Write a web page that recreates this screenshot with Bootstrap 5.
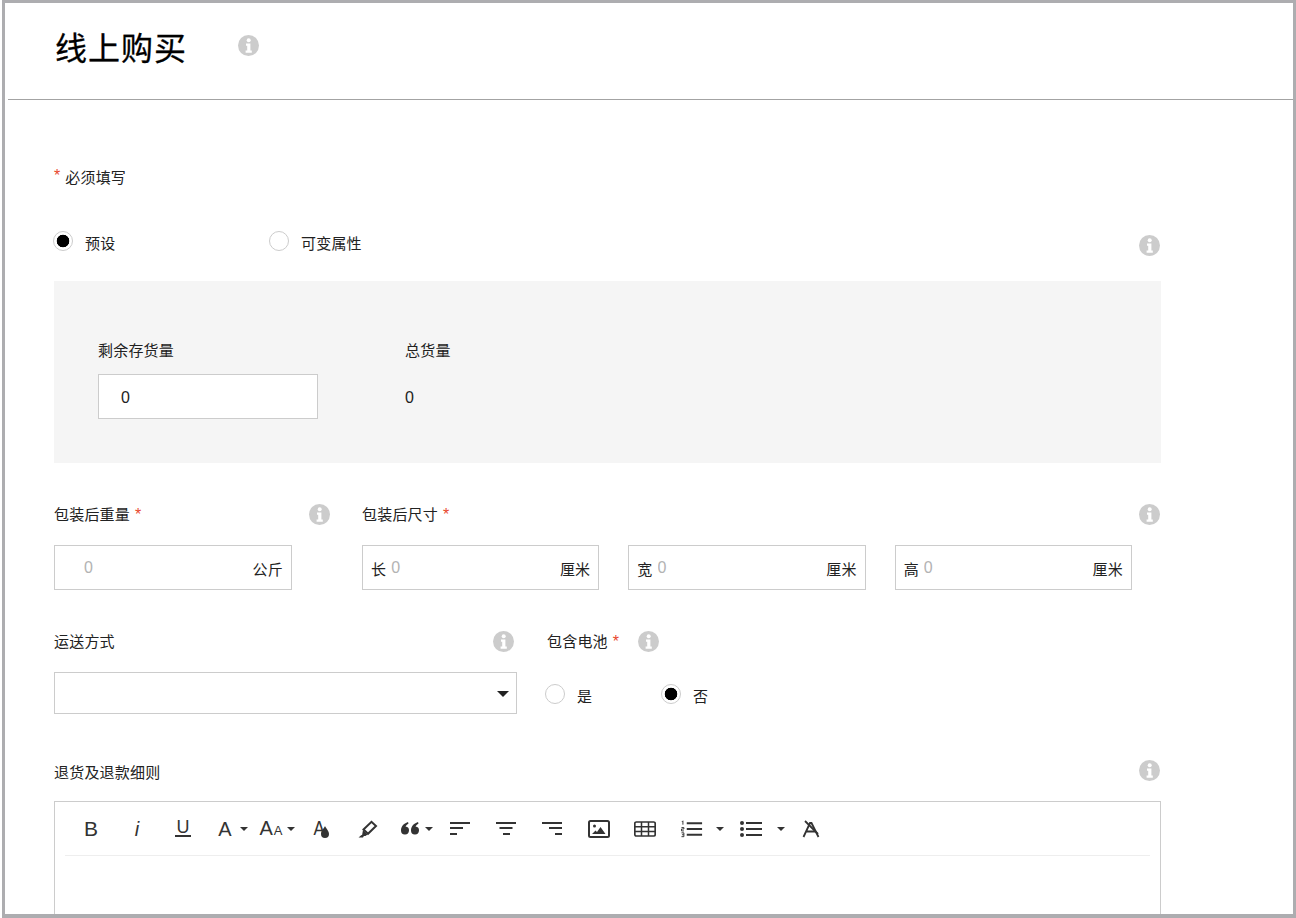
<!DOCTYPE html>
<html lang="zh">
<head>
<meta charset="utf-8">
<title>线上购买</title>
<link href="https://cdn.jsdelivr.net/npm/bootstrap@5.3.0/dist/css/bootstrap.min.css" rel="stylesheet">
<style>
html,body{margin:0;height:918px;overflow:hidden;background:#fff}
body{font-family:"Liberation Sans","Noto Sans CJK SC",sans-serif;font-size:15px;color:#222;letter-spacing:.2px}
.frame{margin-left:2px;width:1294px;height:918px;border:3px solid #adadb0;border-bottom-width:4px;overflow:hidden;background:#fff}
.head-bar{height:97px;margin-left:3px;border-bottom:1px solid #a3a3a3;padding:0 0 11px 47px;gap:51px}
.head-bar h1{font-size:32px;font-weight:400;color:#000;margin:0;letter-spacing:1px;line-height:48px;font-family:"Noto Sans CJK SC",sans-serif;-webkit-text-stroke:.3px #000}
.ic{flex:none;display:block;width:21px;height:21px}
.body-wrap{padding-left:49px;width:1156px}
.req-note{height:20px;margin-top:68px;line-height:20px}
.star{color:#e8472b;font-size:16px;font-family:"Liberation Sans",sans-serif;margin-left:5px;letter-spacing:0}
.note-star{margin:0 5px 0 0;position:relative;top:-2px}
.radio-row{margin-top:46px;height:24px;padding-right:1px}
.rd{width:20px;height:20px;border-radius:50%;border:1px solid #ccc;background:#fff;flex:none;position:relative;top:-3px;margin:0 0 0 -1px;appearance:none}
.rd:checked{border-color:#ccc;background:radial-gradient(circle at center,#000 0 6px,#fff 6.6px)}
.rd-lbl{margin-left:12px;line-height:20px;position:relative}
.rd-first{width:216px}
.radio-row .ic{margin-top:1px}
.panel{background:#f5f5f5;margin-top:23px;height:182px;padding:60px 0 0 44px;gap:87px}
.lbl{line-height:20px;display:block;margin:0}
.stock-input{width:220px;height:45px;margin-top:13px;border:1px solid #ccc;background:#fff;padding:2px 0 0 22px;font:16px "Liberation Sans",sans-serif;color:#222;border-radius:0;outline:0;display:block}
.stock-val{margin-top:14px;line-height:45px;font-size:16px;font-family:"Liberation Sans",sans-serif}
.row-pack{margin-top:42px}
.w-weight{width:238px}
.w-size{width:770px;margin-left:70px}
.lbl-line{height:20px;line-height:20px}
.lbl-line .ic{margin-top:-1px}
.weight-line{width:276px}
.size-line{width:798px}
.boxes{margin-top:20px;gap:29px}
.unit-box{height:45px;width:238px;border:1px solid #ccc;background:#fff;padding:0 8px 0 8px;color:#222}
.unit-box input{border:0;outline:0;min-width:0;flex:1;width:100%;background:transparent;padding:0 0 0 5px;height:100%;font:16px "Liberation Sans",sans-serif;letter-spacing:0}
.unit-box input::placeholder{color:#b3b3b3;opacity:1}
.unit-box span{flex:none;position:relative;top:3px}
.weight-box input{padding-left:21px}
.row-ship{margin-top:42px}
.w-ship{width:463px}
.ship-line{padding-right:3px}
.w-batt{margin-left:30px}
.batt-line{gap:19px}
.batt-name{width:72px;white-space:nowrap;flex:none}
.ship-sel{margin-top:20px;height:42px;width:463px;border:1px solid #ccc;background:#fff;border-radius:0;position:relative}
.caret-dn{width:0;height:0;border-left:6px solid transparent;border-right:6px solid transparent;border-top:6px solid #222;position:absolute;right:7px;top:18px}
.batt-rds{margin-top:33px;height:30px}
.batt-rds .rd{margin-left:-2px;top:-1px}
.batt-first{width:116px}
.batt-rds .rd-lbl{top:2px}
.row-ret{margin-top:48px}
.row-ret .ic{margin-top:-3px;margin-right:1px}
.editor{margin-top:18px;width:1107px;height:200px;border:1px solid #ccc;padding:0 10px}
.tools{height:54px;border-bottom:1px solid #eee;padding-left:3px;align-items:center;letter-spacing:0;color:#333}
.tb{height:30px;width:46px;flex:none;display:flex;align-items:center;justify-content:center;position:relative;font-family:"Liberation Sans",sans-serif;color:#333;line-height:1}
.tb.w60{width:60px;justify-content:flex-start}
.tb.nudge{margin-left:1px}
.tb svg{display:block}
.ol-ic{margin-left:13px}
.ul-ic{margin-left:12px}
.cr{position:absolute;width:0;height:0;border-left:4px solid transparent;border-right:4px solid transparent;border-top:4px solid #333;top:13px}
.t-b{font-size:21px}
.t-i{font-size:20px;font-style:italic}
.t-u{font-size:18px;border-bottom:2px solid #333;line-height:15px;height:17px;width:16px;text-align:center;display:block}
.t-a{font-size:20px}
.aa-wrap{font-size:20px;line-height:20px;width:23px;white-space:nowrap;display:block;position:relative;top:1px}
.aa-wrap span{font-size:13px;margin-left:1px}
.t-ad{font-size:21px;position:relative;left:-2px;top:-1px;transform:scaleX(.8)}
</style>
</head>
<body>
<svg width="0" height="0" class="position-absolute">
<defs>
<symbol id="info" viewBox="0 0 21 21"><circle cx="10.5" cy="10.5" r="10.5" fill="#ccc"/><circle cx="10.7" cy="5.2" r="2" fill="#fff"/><path d="M8 8.600h4.400v7h1.400v2.200H7.600v-2.200h1.600v-4.800H8z" fill="#fff"/></symbol>
</defs>
</svg>
<div class="frame">
  <div class="head-bar d-flex align-items-center">
    <h1>线上购买</h1>
    <svg class="ic"><use href="#info"/></svg>
  </div>
  <div class="body-wrap">
    <div class="req-note"><span class="star note-star">*</span>必须填写</div>

    <div class="radio-row d-flex align-items-start">
      <div class="rd-first d-flex"><input class="rd" type="radio" name="m" checked><span class="rd-lbl">预设</span></div>
      <div class="d-flex flex-grow-1"><input class="rd" type="radio" name="m"><span class="rd-lbl">可变属性</span></div>
      <svg class="ic"><use href="#info"/></svg>
    </div>

    <div class="panel d-flex">
      <div><label class="lbl">剩余存货量</label><input class="stock-input" value="0"></div>
      <div><span class="lbl">总货量</span><div class="stock-val">0</div></div>
    </div>

    <div class="row-pack d-flex">
      <div class="w-weight">
        <div class="lbl-line weight-line d-flex justify-content-between"><span>包装后重量<span class="star">*</span></span><svg class="ic"><use href="#info"/></svg></div>
        <div class="boxes d-flex"><div class="unit-box weight-box d-flex align-items-center"><input placeholder="0"><span>公斤</span></div></div>
      </div>
      <div class="w-size">
        <div class="lbl-line size-line d-flex justify-content-between"><span>包装后尺寸<span class="star">*</span></span><svg class="ic"><use href="#info"/></svg></div>
        <div class="boxes d-flex">
          <div class="unit-box d-flex align-items-center"><span>长</span><input placeholder="0"><span>厘米</span></div>
          <div class="unit-box d-flex align-items-center"><span>宽</span><input placeholder="0"><span>厘米</span></div>
          <div class="unit-box d-flex align-items-center"><span>高</span><input placeholder="0"><span>厘米</span></div>
        </div>
      </div>
    </div>

    <div class="row-ship d-flex">
      <div class="w-ship">
        <div class="lbl-line ship-line d-flex justify-content-between"><span>运送方式</span><svg class="ic"><use href="#info"/></svg></div>
        <div class="ship-sel"><i class="caret-dn"></i></div>
      </div>
      <div class="w-batt">
        <div class="lbl-line batt-line d-flex"><span class="batt-name">包含电池<span class="star">*</span></span><svg class="ic"><use href="#info"/></svg></div>
        <div class="batt-rds d-flex">
          <div class="batt-first d-flex"><input class="rd" type="radio" name="b"><span class="rd-lbl">是</span></div>
          <div class="d-flex"><input class="rd" type="radio" name="b" checked><span class="rd-lbl">否</span></div>
        </div>
      </div>
    </div>

    <div class="row-ret lbl-line d-flex justify-content-between"><span>退货及退款细则</span><svg class="ic"><use href="#info"/></svg></div>
    <div class="editor">
      <div class="tools d-flex">
        <div class="tb t-b">B</div>
        <div class="tb t-i">i</div>
        <div class="tb"><span class="t-u">U</span></div>
        <div class="tb t-a"><span class="me-2">A</span><i class="cr" style="left:34px"></i></div>
        <div class="tb"><span class="aa-wrap me-2">A<span>A</span></span><i class="cr" style="left:35px"></i></div>
        <div class="tb"><span class="t-ad">A</span><svg width="10" height="13" viewBox="0 0 10 13" class="position-absolute" style="left:22px;top:12px"><path d="M5 0c1 2.500 4 4.800 4 8a4 4 0 0 1-8 0c0-3.200 3-5.500 4-8z" fill="#333"/></svg></div>
        <div class="tb nudge"><svg width="22" height="20" viewBox="0 0 22 20"><path d="M6.500 10.500 14.500 2.800l4.500 4.200-8 7.800z" fill="none" stroke="#333" stroke-width="2"/><path d="M6 11l4.500 4.500-2 1.500-3.500-.5zM1.500 18.500l3-2.500 2.500.8-1 1.700z" fill="#333"/></svg></div>
        <div class="tb"><svg class="me-2" width="20" height="14" viewBox="0 0 20 14"><path d="M8 0C3.500 1.500 1 4.500 1 8.500a4 4 0 1 0 4.500-4c.5-1 1.500-2 3-3zM18 0c-4.500 1.500-7 4.500-7 8.500a4 4 0 1 0 4.500-4c.5-1 1.500-2 3-3z" fill="#333"/></svg><i class="cr" style="left:34px"></i></div>
        <div class="tb"><svg width="22" height="16" viewBox="0 0 22 16" fill="#333"><rect x="1" y="1" width="20" height="2"/><rect x="1" y="6" width="13" height="2"/><rect x="1" y="12" width="7" height="2"/></svg></div>
        <div class="tb"><svg width="22" height="16" viewBox="0 0 22 16" fill="#333"><rect x="1" y="1" width="20" height="2"/><rect x="4.500" y="6" width="13" height="2"/><rect x="8" y="12" width="7" height="2"/></svg></div>
        <div class="tb"><svg width="22" height="16" viewBox="0 0 22 16" fill="#333"><rect x="1" y="1" width="20" height="2"/><rect x="8" y="6" width="13" height="2"/><rect x="14" y="12" width="7" height="2"/></svg></div>
        <div class="tb nudge"><svg width="22" height="18" viewBox="0 0 22 18"><rect x="1" y="1" width="20" height="16" rx="1.500" fill="none" stroke="#333" stroke-width="2"/><circle cx="6.500" cy="6" r="1.500" fill="#333"/><path d="M4 14l3.500-3.500 1.500 1.500 3.500-5 5 7z" fill="#333"/></svg></div>
        <div class="tb"><svg width="22" height="16" viewBox="0 0 22 16" fill="none" stroke="#333" stroke-width="1.500"><rect x=".8" y="1" width="20.400" height="14" rx="1.500" stroke-width="1.700"/><path d="M1 5.800h20M1 10.400h20M7.500 1v14M14.500 1v14"/></svg></div>
        <div class="tb w60"><svg class="ol-ic" width="23" height="18" viewBox="0 0 24 18"><g stroke="#333" stroke-width="2"><path d="M6 3h16M6 9h16M6 15h16"/></g><g stroke="#333" stroke-width="1" fill="none"><path d="M1 1.500l1-1v4M.5 7.500h2.500v1.500h-2.500v2h2.500M.5 13h2.500v4h-2.500M1 15h2"/></g></svg><i class="cr" style="left:48px"></i></div>
        <div class="tb w60"><svg class="ul-ic" width="24" height="16" viewBox="0 0 24 16"><g stroke="#333" stroke-width="2"><path d="M6 2h16M6 8h16M6 14h16"/></g><circle cx="2" cy="2" r="2" fill="#333"/><circle cx="2" cy="8" r="2" fill="#333"/><circle cx="2" cy="14" r="2" fill="#333"/></svg><i class="cr" style="left:49px"></i></div>
        <div class="tb"><svg width="18" height="18" viewBox="0 0 18 18" fill="none" stroke="#333"><path d="M1.500 17 8 3l1.500 0L16.500 17M4.500 11.500h9" stroke-width="1.800"/><path d="M3 1l13 13" stroke-width="1.800"/></svg></div>
      </div>
    </div>
  </div>
</div>
<script src="https://cdn.jsdelivr.net/npm/bootstrap@5.3.0/dist/js/bootstrap.bundle.min.js"></script>
</body>
</html>
